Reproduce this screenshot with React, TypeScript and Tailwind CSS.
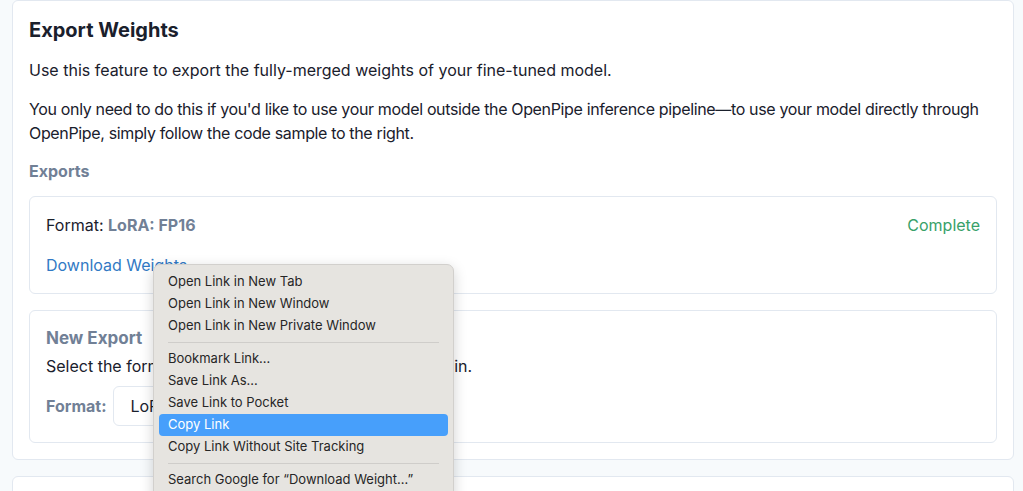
import React from "react";

const font = { fontFamily: "Inter, 'Noto Sans', sans-serif" };

function MenuItem({ label, active }: { label: string; active?: boolean }) {
  return (
    <div
      className={
        "mx-[5px] h-[22px] flex items-center px-[9px] rounded-[4px] text-[13px] " +
        (active ? "bg-[#479ffb] text-white" : "text-[#262626]")
      }
    >
      {label}
    </div>
  );
}

function Sep() {
  return <div className="mx-[14px] my-[5px] h-px bg-[#cfcdca]" />;
}

export default function App() {
  return (
    <div className="relative w-[1023px] h-[491px] overflow-hidden bg-[#f7fafc] text-[#1a202c]" style={font}>
      <div className="pl-3 pr-[9px] flex flex-col gap-[16px]">
        <div className="bg-white border border-[#e2e8f0] rounded-md px-4 pt-4 pb-4">
          <h2 className="text-[20px] leading-[26px] font-bold text-[#1a202c]">Export Weights</h2>
          <p className="mt-[15px] text-[16px] leading-[24px]">
            Use this feature to export the fully-merged weights of your fine-tuned model.
          </p>
          <p className="mt-[15px] text-[16px] leading-[24px] tracking-[-0.35px]">
            You only need to do this if you'd like to use your model outside the OpenPipe inference pipeline—to use your model directly through OpenPipe, simply follow the code sample to the right.
          </p>
          <h3 className="mt-[14px] text-[16px] leading-[24px] font-bold text-[#718096]">Exports</h3>
          <div className="mt-[13px] border border-[#e2e8f0] rounded-md p-4 flex flex-col gap-4">
            <div className="flex justify-between text-[16px] leading-[24px]">
              <span>
                Format: <span className="font-bold text-[#718096]">LoRA: FP16</span>
              </span>
              <span className="text-[#38a169]">Complete</span>
            </div>
            <div className="text-[16px] leading-[24px]">
              <a className="text-[#3179c4]">Download Weights</a>
            </div>
          </div>
          <div className="mt-4 border border-[#e2e8f0] rounded-md px-4 pt-[17px] pb-4">
            <h3 className="text-[17px] leading-[20px] font-bold text-[#718096]">New Export</h3>
            <p className="mt-[6px] text-[16px] leading-[24px]">
              Select the format you would like to export your model in.
            </p>
            <div className="mt-2 flex items-center gap-[7px]">
              <span className="text-[16px] font-bold text-[#718096]">Format:</span>
              <div className="h-[40px] w-[300px] border border-[#e2e8f0] rounded-md px-4 flex items-center text-[16px]">
                LoRA: FP16
              </div>
            </div>
          </div>
        </div>
        <div className="bg-white border border-[#e2e8f0] rounded-md h-[100px]" />
      </div>

      <div className="absolute left-[153px] top-[264px] w-[301px] h-[240px] bg-[#e6e4e0] border border-[#d2d0cd] rounded-[7px] shadow-[0_4px_14px_rgba(0,0,0,0.18)] pt-[6px]">
        <MenuItem label="Open Link in New Tab" />
        <MenuItem label="Open Link in New Window" />
        <MenuItem label="Open Link in New Private Window" />
        <Sep />
        <MenuItem label="Bookmark Link…" />
        <MenuItem label="Save Link As…" />
        <MenuItem label="Save Link to Pocket" />
        <MenuItem label="Copy Link" active />
        <MenuItem label="Copy Link Without Site Tracking" />
        <Sep />
        <MenuItem label="Search Google for “Download Weight…”" />
      </div>
    </div>
  );
}
